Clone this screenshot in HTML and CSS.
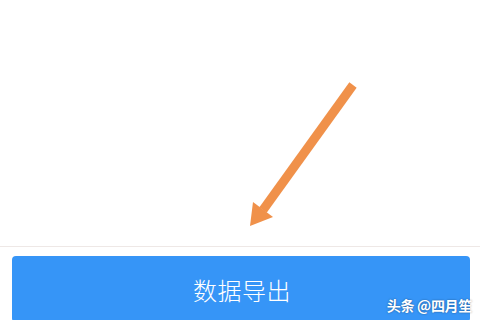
FILE: index.html
```html
<!DOCTYPE html>
<html lang="zh">
<head>
<meta charset="utf-8">
<link rel="stylesheet" href="styles.css">
</head>
<body>
<div class="page">
  <div class="content">
    <svg class="arrow" width="480" height="246" viewBox="0 0 480 246">
      <line x1="353" y1="85" x2="263" y2="210" stroke="#f0914a" stroke-width="9" stroke-linecap="butt"/>
      <polygon points="250,226 253,202 273,217" fill="#f0914a"/>
    </svg>
  </div>
  <div class="divider"></div>
  <div class="footer">
    <div class="btn">数据导出</div>
  </div>
  <div class="watermark">头条 @四月笙</div>
</div>
</body>
</html>
```
FILE: styles.css
```css
html, body {
  margin: 0;
  padding: 0;
  background: #ffffff;
  overflow: hidden;
}
.page {
  position: relative;
  width: 480px;
  height: 320px;
  overflow: hidden;
  display: flex;
  flex-direction: column;
  font-family: "Noto Sans CJK SC", "Noto Sans", sans-serif;
}
.content {
  position: relative;
  height: 246px;
  flex: none;
}
.arrow {
  position: absolute;
  left: 0;
  top: 0;
}
.divider {
  height: 1px;
  background: #eee8e6;
  flex: none;
}
.footer {
  padding: 9px 10px 0 12px;
  flex: none;
}
.btn {
  height: 66px;
  border-radius: 4px;
  background: #3695f7;
  color: #ffffff;
  font-size: 24px;
  font-weight: 300;
  letter-spacing: 0.5px;
  display: flex;
  align-items: center;
  justify-content: center;
  padding-left: 2px;
}
.watermark {
  position: absolute;
  right: 8px;
  top: 295px;
  color: #ffffff;
  font-size: 14px;
  font-weight: 700;
  text-shadow: 0 0 2px rgba(0,0,0,0.45);
  letter-spacing: -0.3px;
}
```
